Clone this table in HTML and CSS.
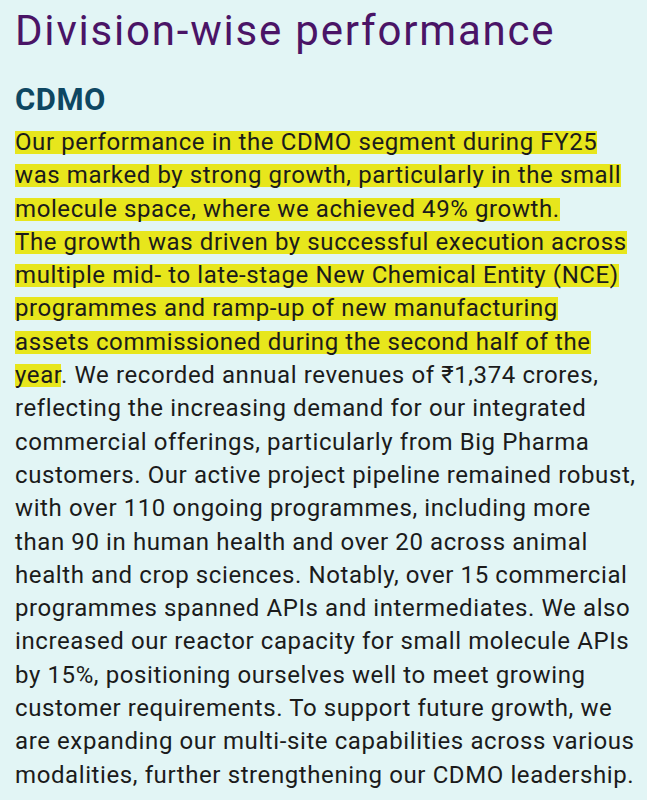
FILE: index.html
```html
<!DOCTYPE html>
<html>
<head>
<meta charset="utf-8">
<link rel="stylesheet" href="styles.css">
</head>
<body>
<main class="page">
  <h1 class="title">Division-wise performance</h1>
  <h2 class="section">CDMO</h2>
  <p class="body">
    <span class="hl">Our performance in the CDMO segment during FY25</span><br>
    <span class="hl">was marked by strong growth, particularly in the small</span><br>
    <span class="hl">molecule space, where we achieved 49% growth.</span><br>
    <span class="hl">The growth was driven by successful execution across</span><br>
    <span class="hl">multiple mid- to late-stage New Chemical Entity (NCE)</span><br>
    <span class="hl">programmes and ramp-up of new manufacturing</span><br>
    <span class="hl">assets commissioned during the second half of the</span><br>
    <span class="hl">year</span>. We recorded annual revenues of ₹1,374 crores,<br>
    reflecting the increasing demand for our integrated<br>
    commercial offerings, particularly from Big Pharma<br>
    customers. Our active project pipeline remained robust,<br>
    with over 110 ongoing programmes, including more<br>
    than 90 in human health and over 20 across animal<br>
    health and crop sciences. Notably, over 15 commercial<br>
    programmes spanned APIs and intermediates. We also<br>
    increased our reactor capacity for small molecule APIs<br>
    by 15%, positioning ourselves well to meet growing<br>
    customer requirements. To support future growth, we<br>
    are expanding our multi-site capabilities across various<br>
    modalities, further strengthening our CDMO leadership.
  </p>
</main>
</body>
</html>
```
FILE: styles.css
```css
html, body {
  margin: 0;
  padding: 0;
  background: #e2f5f5;
}
.page {
  width: 647px;
  height: 800px;
  box-sizing: border-box;
  padding: 0 0 0 15px;
  font-family: Roboto, "Liberation Sans", sans-serif;
  overflow: hidden;
}
.title {
  margin: 0;
  padding-top: 6px;
  font-size: 42px;
  line-height: 50px;
  font-weight: 400;
  color: #4a1466;
  letter-spacing: 1.8px;
}
.section {
  margin: 0;
  padding-top: 26px;
  font-size: 31px;
  line-height: 36px;
  font-weight: 700;
  color: #0e4762;
  letter-spacing: 0.5px;
}
.body {
  margin: 0;
  padding-top: 8px;
  font-size: 24px;
  line-height: 33.3px;
  color: #1b1b1b;
  letter-spacing: 0.6px;
  white-space: nowrap;
}
.hl {
  background-image: linear-gradient(#e7e61c, #e7e61c);
  background-repeat: no-repeat;
  background-size: 100% 23px;
  background-position: 0 3px;
}
```
